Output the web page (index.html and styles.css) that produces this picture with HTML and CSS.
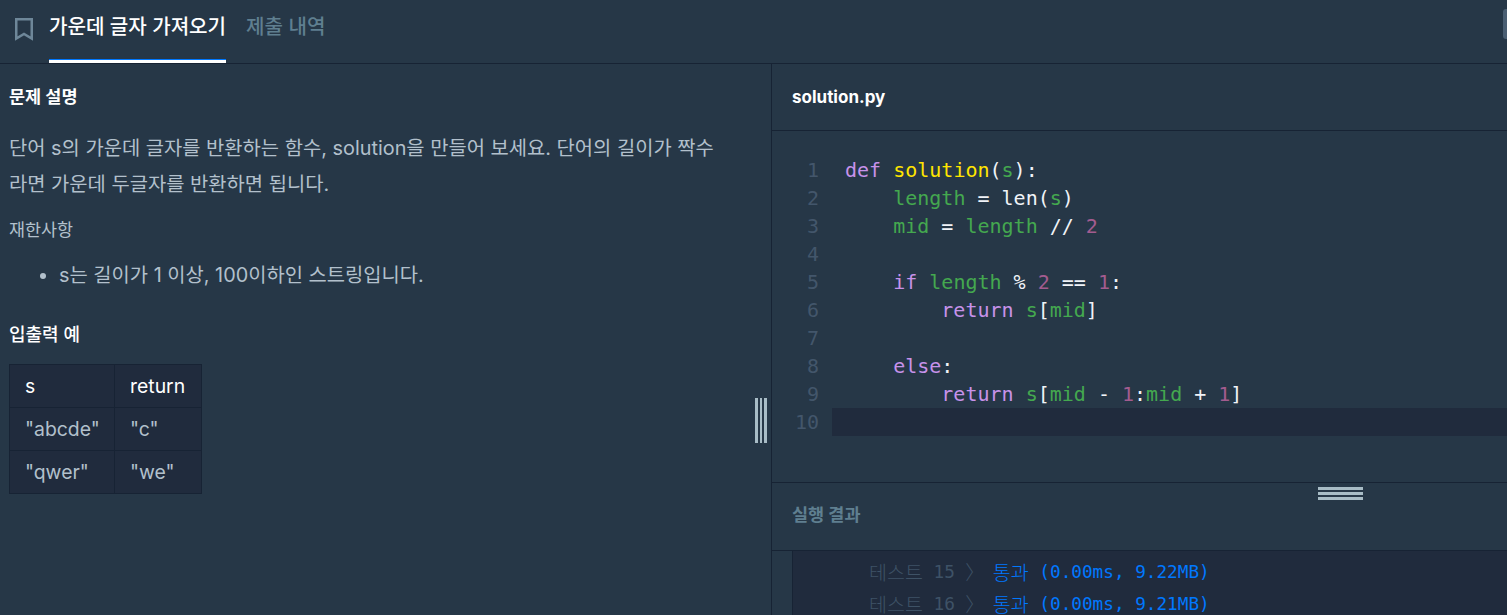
FILE: index.html
```html
<!DOCTYPE html>
<html lang="ko">
<head>
<meta charset="utf-8">
<title>가운데 글자 가져오기</title>
<link rel="stylesheet" href="styles.css">
</head>
<body>
<header class="topbar">
  <svg class="bookmark" width="24" height="28" viewBox="0 0 24 28" fill="none" stroke="#6e8799" stroke-width="2.500"><path d="M4.250 4.250H19.750V23.500L12 19L4.250 23.500z"/></svg>
  <nav class="tabs">
    <a class="tab active">가운데 글자 가져오기</a>
    <a class="tab">제출 내역</a>
  </nav>
</header>
<main class="main">
  <section class="desc">
    <h5 class="h-strong">문제 설명</h5>
    <p class="para">단어 s의 가운데 글자를 반환하는 함수, solution을 만들어 보세요. 단어의 길이가 짝수라면 가운데 두글자를 반환하면 됩니다.</p>
    <h6 class="h-sub">재한사항</h6>
    <ul class="list"><li>s는 길이가 1 이상, 100이하인 스트링입니다.</li></ul>
    <h5 class="h-io">입출력 예</h5>
    <table class="tbl">
      <thead><tr><th>s</th><th>return</th></tr></thead>
      <tbody>
        <tr><td>"abcde"</td><td>"c"</td></tr>
        <tr><td>"qwer"</td><td>"we"</td></tr>
      </tbody>
    </table>
    <div class="vhandle"></div>
  </section>
  <section class="work">
    <div class="filebar">solution.py</div>
    <div class="editor">
      <div class="line"><span class="no">1</span><code><i class="k">def</i> <i class="f">solution</i>(<i class="v">s</i>):</code></div>
      <div class="line"><span class="no">2</span><code>    <i class="v">length</i> = len(<i class="v">s</i>)</code></div>
      <div class="line"><span class="no">3</span><code>    <i class="v">mid</i> = <i class="v">length</i> // <i class="n">2</i></code></div>
      <div class="line"><span class="no">4</span><code></code></div>
      <div class="line"><span class="no">5</span><code>    <i class="k">if</i> <i class="v">length</i> % <i class="n">2</i> == <i class="n">1</i>:</code></div>
      <div class="line"><span class="no">6</span><code>        <i class="k">return</i> <i class="v">s</i>[<i class="v">mid</i>]</code></div>
      <div class="line"><span class="no">7</span><code></code></div>
      <div class="line"><span class="no">8</span><code>    <i class="k">else</i>:</code></div>
      <div class="line"><span class="no">9</span><code>        <i class="k">return</i> <i class="v">s</i>[<i class="v">mid</i> - <i class="n">1</i>:<i class="v">mid</i> + <i class="n">1</i>]</code></div>
      <div class="line current"><span class="no">10</span><code></code></div>
    </div>
    <div class="resulthead">실행 결과<div class="hhandle"></div></div>
    <div class="output">
      <div class="outinner">
        <div class="row"><span class="ko tname">테스트</span><span class="tname"> 15</span><span class="ko chev">〉</span><span class="ko pass">통과</span><span class="pass"> (0.00ms, 9.22MB)</span></div>
        <div class="row"><span class="ko tname">테스트</span><span class="tname"> 16</span><span class="ko chev">〉</span><span class="ko pass">통과</span><span class="pass"> (0.00ms, 9.21MB)</span></div>
      </div>
    </div>
  </section>
</main>
<div class="scrollnub"></div>
</body>
</html>
```
FILE: styles.css
```css
* { box-sizing: border-box; }
html, body { height: 100%; }
body {
  margin: 0;
  height: 615px;
  overflow: hidden;
  background: #263747;
  color: #b2c0cc;
  font-family: "Inter", "Noto Sans CJK KR", sans-serif;
  position: relative;
}
.topbar {
  height: 64px;
  display: flex;
  align-items: flex-start;
  border-bottom: 1px solid #172334;
}
.bookmark { margin: 15px 0 0 12px; flex: none; }
.tabs { display: flex; margin-left: 13px; gap: 20px; }
.tab {
  height: 63px;
  padding-top: 12px;
  font-size: 20.1px;
  line-height: 30px;
  color: #5f7f90;
  font-weight: 500;
}
.tab.active { color: #fff; border-bottom: 3px solid #fff; box-shadow: inset 0 -1px 0 #0078ff; }
.main { display: flex; height: 551px; }
.desc { width: 772px; flex: none; border-right: 1px solid #172334; padding: 17px 48px 0 9px; position: relative; }
.h-strong { margin: 0; font-size: 17.5px; line-height: 32px; font-weight: 700; color: #fff; }
.para { margin: 17px 0 0; font-size: 19.85px; line-height: 36px; font-weight: 400; }
.h-sub { margin: 12px 0 0; font-size: 17.4px; line-height: 32px; font-weight: 400; }
.list { margin: 11px 0 0; padding-left: 50px; font-size: 19.85px; line-height: 36px; }
.list li::marker { color: #b2c0cc; }
.h-io { margin: 26px 0 0; font-size: 18px; line-height: 32px; font-weight: 500; color: #fff; }
.tbl { margin-top: 13px; border-collapse: collapse; background: #202b3d; font-size: 19.4px; table-layout: fixed; width: 193px; }
.tbl th, .tbl td { border: 1px solid #172334; padding: 0 15px; height: 43px; text-align: left; font-weight: 400; }
.tbl th { color: #fff; }
.tbl th:first-child { width: 105px; }
.vhandle {
  position: absolute;
  left: 755px; top: 334px;
  width: 12px; height: 45px;
  background: linear-gradient(90deg, #a8bcc6 0 2.67px, transparent 2.67px 4.67px, #a8bcc6 4.67px 7.33px, transparent 7.33px 9.33px, #a8bcc6 9.33px 12px);
}
.work { flex: 1; min-width: 0; display: flex; flex-direction: column; }
.filebar {
  height: 67px;
  border-bottom: 1px solid #172334;
  padding: 17px 0 0 20px;
  font-size: 17px;
  line-height: 32px;
  font-weight: 700;
  color: #fff;
}
.editor {
  height: 352px;
  padding-top: 25px;
  border-bottom: 1px solid #172334;
  font-family: "DejaVu Sans Mono", monospace;
  font-size: 20px;
  line-height: 28px;
}
.line { display: flex; height: 28px; }
.no { width: 47px; text-align: right; color: #43566b; flex: none; }
.line code { font: inherit; white-space: pre; padding-left: 26px; color: #f0f3f8; flex: 1; }
.line code i { font-style: normal; }
.k { color: #c792ea; }
.f { color: #ffe500; }
.v { color: #44a84f; }
.n { color: #a35c8f; }
.line.current { background: linear-gradient(#202b3d, #202b3d) 60px 0 no-repeat; }
.resulthead {
  height: 68px;
  border-bottom: 1px solid #172334;
  padding: 16px 0 0 20px;
  font-size: 17.5px;
  line-height: 32px;
  font-weight: 700;
  color: #5f7f90;
  position: relative;
}
.hhandle {
  position: absolute;
  left: 546px; top: 4px;
  width: 45px; height: 13px;
  background: linear-gradient(180deg, #a8bcc6 0 3px, transparent 3px 5px, #a8bcc6 5px 8px, transparent 8px 10px, #a8bcc6 10px 13px);
}
.output { flex: 1; padding-left: 20px; overflow: hidden; }
.outinner { display: flex; flex-direction: column; gap: 10px; height: 100%; background: #202b3d; border-left: 1px solid #172334; padding: 10px 0 0 76px; font-size: 17.7px; font-family: "DejaVu Sans Mono", "Noto Sans CJK KR", monospace; }
.row { display: flex; height: 22px; line-height: 22px; white-space: pre; }
.ko { font-family: "Noto Sans CJK KR", sans-serif; font-size: 19.5px; font-weight: 300; }
.tname { color: #3e5266; }
.chev { color: #3e5266; margin: 0 8px 0 10.5px; }
.pass { color: #0078ff; }
.scrollnub { position: absolute; right: 0; top: 9px; width: 4px; height: 30px; background: #4a5e72; border-radius: 3px 0 0 3px; }
```
